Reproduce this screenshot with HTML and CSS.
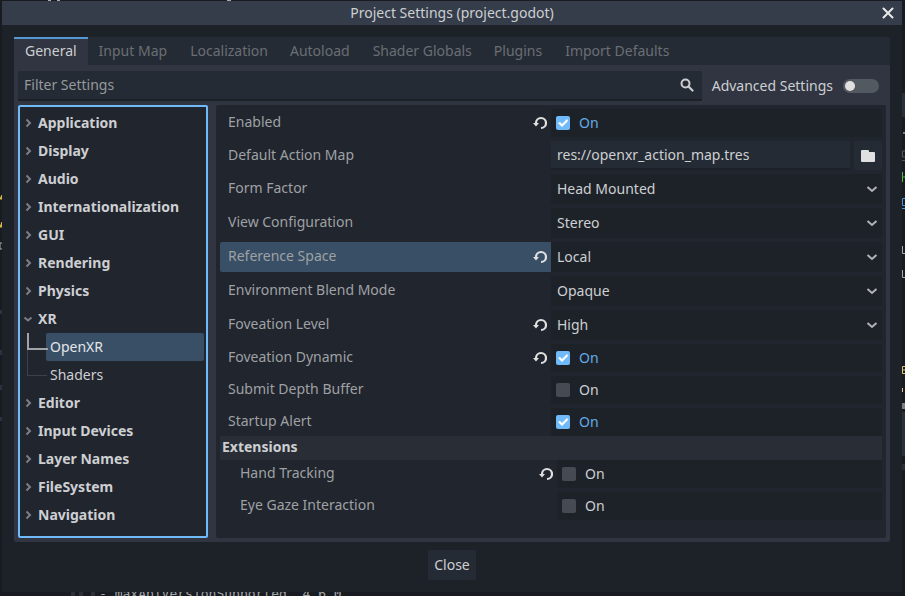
FILE: index.html
```html
<!DOCTYPE html>
<html lang="en">
<head>
<meta charset="utf-8">
<title>Project Settings (project.godot)</title>
<link rel="stylesheet" href="styles.css">
</head>
<body>
<svg class="symbols" aria-hidden="true">
  <symbol id="right" viewBox="0 0 12 12"><path d="M4.500 2.500 8 6 4.500 9.500" fill="none" stroke="currentColor" stroke-width="2"/></symbol>
  <symbol id="down" viewBox="0 0 12 12"><path d="M2.500 4.500 6 7.500 9.500 4.500" fill="none" stroke="currentColor" stroke-width="2"/></symbol>
  <symbol id="drop" viewBox="0 0 12 12"><path d="M1.500 4 6 8 10.500 4" fill="none" stroke="currentColor" stroke-width="2"/></symbol>
  <symbol id="revert" viewBox="0 0 14 14"><path d="M3 8V7a5 5 0 1 1 5 5" fill="none" stroke="currentColor" stroke-width="2.200"/><path d="M0 7h6L3 10.500z" fill="currentColor"/></symbol>
</svg>

<div class="editor" aria-hidden="true">
  <svg class="edge" width="3" height="596" viewBox="0 0 3 596">
    <path d="M0 199l2-4v4zM0 227l2-5v5z" fill="#d9b94c" stroke="#d9b94c"/>
    <path d="M2 243H0v6h2" fill="none" stroke="#a9abad"/>
    <path d="M0 310h2v4H0zM0 350h2v5H0zM0 385h2v5H0zM0 417h2v4H0z" fill="#2c313b"/>
  </svg>
  <svg class="edge edge-right" width="3" height="596" viewBox="0 0 3 596">
    <path d="M0 93h3v24H0zM0 412h3v44H0zM0 464h3v6H0z" fill="#2a303a"/>
    <path d="M1 132h2v2H1zM0 403h3v6H0z" fill="#7b7e82"/>
    <path d="M3 151H.5v6H3M0 160.500h3" fill="none" stroke="#555a61"/>
    <path d="M.5 172v10M.5 177H3" fill="none" stroke="#4fb83d"/>
    <path d="M3 198.500H.5v7H3M0 208.500h3" fill="none" stroke="#4796dc"/>
    <path d="M.5 246v7.500H3M.5 270v7.500H3" fill="none" stroke="#a9abad"/>
    <path d="M3 366.500H.5v7H3M0 370h3M.5 388v4" fill="none" stroke="#d8c878"/>
  </svg>
  <svg class="top-bits" width="240" height="1" viewBox="0 0 240 1"><path d="M48 0h3v1h-3zM57 0h3v1h-3zM227 0h4v1h-4z" fill="#a9abad"/></svg>
  <svg class="bottom-bits" width="96" height="4" viewBox="0 0 96 4"><path d="M71 0h4v4h-4zM79 0h4v4h-4zM91 0h4v4h-4z" fill="#2c2f38"/></svg>
  <p class="log">- maxApiVersionSupported  4.6.0</p>
</div>

<main class="dialog" role="dialog" aria-labelledby="dialog-title">
  <header class="titlebar">
    <h1 id="dialog-title">Project Settings (project.godot)</h1>
    <button class="dismiss" aria-label="Close window"><svg width="12" height="12" viewBox="0 0 12 12"><path d="M1.500 1.500l9 9M10.500 1.500l-9 9" fill="none" stroke="currentColor" stroke-width="2" stroke-linecap="round"/></svg></button>
  </header>

  <div class="content">
    <nav class="tabs" role="tablist">
      <button role="tab" class="tab active" aria-selected="true">General</button>
      <button role="tab" class="tab">Input Map</button>
      <button role="tab" class="tab">Localization</button>
      <button role="tab" class="tab">Autoload</button>
      <button role="tab" class="tab">Shader Globals</button>
      <button role="tab" class="tab">Plugins</button>
      <button role="tab" class="tab">Import Defaults</button>
    </nav>

    <section class="panel">
      <div class="toolbar">
        <div class="search">
          <input type="text" placeholder="Filter Settings" aria-label="Filter Settings">
          <svg width="14" height="14" viewBox="0 0 14 14"><circle cx="5.500" cy="5.500" r="4" fill="none" stroke="currentColor" stroke-width="2"/><path d="M8.500 8.500l4 4" stroke="currentColor" stroke-width="2.200" stroke-linecap="round"/></svg>
        </div>
        <label class="advanced">Advanced Settings <input type="checkbox" class="switch"></label>
      </div>

      <div class="split">
        <ul class="tree">
          <li><a href="#"><svg><use href="#right"/></svg>Application</a></li>
          <li><a href="#"><svg><use href="#right"/></svg>Display</a></li>
          <li><a href="#"><svg><use href="#right"/></svg>Audio</a></li>
          <li><a href="#"><svg><use href="#right"/></svg>Internationalization</a></li>
          <li><a href="#"><svg><use href="#right"/></svg>GUI</a></li>
          <li><a href="#"><svg><use href="#right"/></svg>Rendering</a></li>
          <li><a href="#"><svg><use href="#right"/></svg>Physics</a></li>
          <li><a href="#"><svg><use href="#down"/></svg>XR</a>
            <ul>
              <li class="branch current"><a href="#" aria-current="true">OpenXR</a></li>
              <li class="branch"><a href="#">Shaders</a></li>
            </ul>
          </li>
          <li><a href="#"><svg><use href="#right"/></svg>Editor</a></li>
          <li><a href="#"><svg><use href="#right"/></svg>Input Devices</a></li>
          <li><a href="#"><svg><use href="#right"/></svg>Layer Names</a></li>
          <li><a href="#"><svg><use href="#right"/></svg>FileSystem</a></li>
          <li><a href="#"><svg><use href="#right"/></svg>Navigation</a></li>
        </ul>

        <form class="inspector">
          <div class="row">
            <div class="name"><label for="enabled">Enabled</label><button type="button" class="revert" aria-label="Revert Enabled"><svg><use href="#revert"/></svg></button></div>
            <label class="field check"><input type="checkbox" id="enabled" checked><span>On</span></label>
          </div>
          <div class="row">
            <div class="name"><label for="map">Default Action Map</label></div>
            <div class="path"><input type="text" id="map" value="res://openxr_action_map.tres"><button type="button" aria-label="Browse"><svg width="14" height="12" viewBox="0 0 14 12"><path d="M0 1q0-1 1-1h6q1 0 1 1v1h5q1 0 1 1v8q0 1-1 1H1q-1 0-1-1z" fill="currentColor"/></svg></button></div>
          </div>
          <div class="row">
            <div class="name"><label for="form">Form Factor</label></div>
            <div class="field pick"><select id="form"><option>Head Mounted</option></select><svg><use href="#drop"/></svg></div>
          </div>
          <div class="row">
            <div class="name"><label for="view">View Configuration</label></div>
            <div class="field pick"><select id="view"><option>Stereo</option></select><svg><use href="#drop"/></svg></div>
          </div>
          <div class="row">
            <div class="name selected"><label for="space">Reference Space</label><button type="button" class="revert" aria-label="Revert Reference Space"><svg><use href="#revert"/></svg></button></div>
            <div class="field pick"><select id="space"><option>Local</option></select><svg><use href="#drop"/></svg></div>
          </div>
          <div class="row">
            <div class="name"><label for="blend">Environment Blend Mode</label></div>
            <div class="field pick"><select id="blend"><option>Opaque</option></select><svg><use href="#drop"/></svg></div>
          </div>
          <div class="row">
            <div class="name"><label for="level">Foveation Level</label><button type="button" class="revert" aria-label="Revert Foveation Level"><svg><use href="#revert"/></svg></button></div>
            <div class="field pick"><select id="level"><option>High</option></select><svg><use href="#drop"/></svg></div>
          </div>
          <div class="row">
            <div class="name"><label for="dynamic">Foveation Dynamic</label><button type="button" class="revert" aria-label="Revert Foveation Dynamic"><svg><use href="#revert"/></svg></button></div>
            <label class="field check"><input type="checkbox" id="dynamic" checked><span>On</span></label>
          </div>
          <div class="row">
            <div class="name"><label for="depth">Submit Depth Buffer</label></div>
            <label class="field check"><input type="checkbox" id="depth"><span>On</span></label>
          </div>
          <div class="row">
            <div class="name"><label for="alert">Startup Alert</label></div>
            <label class="field check"><input type="checkbox" id="alert" checked><span>On</span></label>
          </div>
          <fieldset>
            <legend>Extensions</legend>
            <div class="row">
              <div class="name"><label for="hand">Hand Tracking</label><button type="button" class="revert" aria-label="Revert Hand Tracking"><svg><use href="#revert"/></svg></button></div>
              <label class="field check"><input type="checkbox" id="hand"><span>On</span></label>
            </div>
            <div class="row">
              <div class="name"><label for="gaze">Eye Gaze Interaction</label></div>
              <label class="field check"><input type="checkbox" id="gaze"><span>On</span></label>
            </div>
          </fieldset>
        </form>
      </div>
    </section>

    <footer><button class="close">Close</button></footer>
  </div>
</main>
</body>
</html>
```
FILE: styles.css
```css
:root {
  --base: #363d4a;
  --panel: #303541;
  --control: #252b34;
  --well: #21252e;
  --dark: #1d2229;
  --selection: #384f66;
  --accent: #70bafa;
  --text: #cdcfd2;
  --muted: #9fa1a4;
}

* { box-sizing: border-box; }

body {
  margin: 0;
  min-height: 100vh;
  display: flex;
  padding: 1px 3px 4px 2px;
  position: relative;
  background: #181b21;
  color: var(--text);
  font: 14px/20px "Noto Sans", sans-serif;
}

button, input, select {
  margin: 0;
  padding: 0;
  border: 0;
  border-radius: 0;
  background: none;
  color: inherit;
  font: inherit;
  outline: 0;
}

svg { display: block; flex: none; }
ul { list-style: none; margin: 0; padding: 0; }
.symbols { position: absolute; width: 0; height: 0; }

/* Editor window showing around the dialog */
.editor { position: absolute; inset: 0; overflow: hidden; }
.edge { position: absolute; left: 0; top: 0; }
.edge-right { left: auto; right: 0; }
.top-bits { position: absolute; left: 0; top: 0; }
.bottom-bits { position: absolute; left: 0; bottom: 0; }
.log {
  position: absolute;
  left: 99px;
  bottom: -7px;
  margin: 0;
  color: #a3a5a8;
  font: 13px/18px "DejaVu Sans Mono", monospace;
  white-space: pre;
}

.dialog {
  position: relative;
  flex: 1;
  min-width: 0;
  display: flex;
  flex-direction: column;
  background: var(--dark);
}

.titlebar {
  display: grid;
  grid-template-columns: 1fr auto 1fr;
  align-items: center;
  height: 24px;
  padding: 0 8px;
  background: var(--base);
}
.titlebar h1 { grid-column: 2; margin: 0; font-size: 14px; font-weight: 400; }
.dismiss { justify-self: end; color: #e8e9ea; }

.content {
  flex: 1;
  display: flex;
  flex-direction: column;
  padding: 12px;
}

.tabs { display: flex; background: var(--control); border-radius: 0 2px 0 0; }
.tab {
  height: 28px;
  padding: 0 11px 2px;
  border-top: 2px solid transparent;
  color: #6a6e75;
}
.tab:nth-child(even) { padding-right: 12px; }
.tab.active { border-color: #5597d3; background: var(--panel); color: var(--text); }

.panel {
  flex: 1;
  display: flex;
  flex-direction: column;
  gap: 4px;
  padding: 6px 4px 4px;
  border-radius: 0 0 2px 2px;
  background: var(--panel);
}

.toolbar { display: flex; align-items: center; gap: 10px; }
.search {
  flex: 1;
  display: flex;
  align-items: center;
  height: 30px;
  padding: 0 8px 0 6px;
  border-bottom: 2px solid #1c2027;
  border-radius: 2px 2px 0 0;
  background: var(--control);
}
.search input { flex: 1; min-width: 0; height: 28px; padding-bottom: 2px; }
.search input::placeholder { color: #95989d; opacity: 1; }
.advanced { display: flex; align-items: center; gap: 10px; padding-right: 7px; }
.switch {
  appearance: none;
  width: 36px;
  height: 14px;
  padding: 2px;
  border-radius: 7px;
  background: #535961;
}
.switch::before {
  content: "";
  display: block;
  width: 10px;
  height: 10px;
  border-radius: 5px;
  background: #e0e0e0;
}

.split { flex: 1; display: flex; gap: 8px; }

.tree {
  flex: 0 0 190px;
  padding: 2px;
  border: 2px solid var(--accent);
  border-radius: 2px;
  background: var(--well);
}
.tree a {
  display: flex;
  align-items: center;
  gap: 4px;
  height: 28px;
  color: inherit;
  font-weight: 700;
  text-decoration: none;
}
.tree svg { width: 12px; height: 12px; color: #7c7f85; }
.branch { position: relative; padding-left: 24px; }
.branch::before {
  content: "";
  position: absolute;
  left: 5px;
  top: -11px;
  width: 19px;
  height: 25px;
  border: solid #3b4049;
  border-width: 0 0 1px 1px;
}
.branch.current::before { top: 0; height: 15px; border-color: #a0a3a7; border-width: 0 0 2px 2px; }
.branch a { padding-left: 4px; border-radius: 2px; font-weight: 400; }
.branch.current a { background: var(--selection); color: #e4e6e8; }

.inspector {
  flex: 1;
  min-width: 0;
  display: flex;
  flex-direction: column;
  gap: 4px;
  padding: 4px;
  border-radius: 2px;
  background: var(--well);
}
.row { display: grid; grid-template-columns: 1fr 1fr; }
.name {
  display: flex;
  align-items: center;
  justify-content: space-between;
  padding: 0 4px 0 8px;
  border-radius: 2px 0 0 2px;
  color: var(--muted);
}
.name label { padding-bottom: 2px; }
.name.selected { background: var(--selection); }
.revert { color: #e0e0e0; }
.revert svg { width: 14px; height: 14px; }

.field { border-radius: 2px; background: var(--dark); }
.check { display: flex; align-items: center; gap: 9px; height: 28px; padding-left: 5px; }
.check input {
  appearance: none;
  width: 14px;
  height: 14px;
  border-radius: 2px;
  background: #464a53;
}
.check input:checked { background: var(--accent); }
.check input:checked::before {
  content: "";
  display: block;
  width: 14px;
  height: 14px;
  background: #fff;
  clip-path: polygon(2px 7px, 4px 6px, 6px 8px, 11px 3px, 12px 5px, 6px 11px);
}
.check input:checked + span { color: #63abe6; }

.pick { display: grid; align-items: center; }
.pick select, .pick svg { grid-area: 1 / 1; }
.pick select { appearance: none; width: 100%; height: 30px; padding: 0 24px 0 6px; }
.pick svg { justify-self: end; width: 12px; height: 12px; margin-right: 4px; color: #b0b2b5; pointer-events: none; }

.path { display: flex; align-items: flex-start; gap: 4px; }
.path input {
  flex: 1;
  min-width: 0;
  height: 29px;
  padding: 0 6px;
  border-bottom: 2px solid #1c2027;
  background: var(--control);
}
.path button {
  display: grid;
  place-items: center;
  width: 28px;
  height: 29px;
  border-radius: 2px;
  background: var(--control);
  color: #e0e0e0;
}

fieldset {
  display: flex;
  flex-direction: column;
  gap: 4px;
  min-width: 0;
  margin: -4px 0 0;
  padding: 0;
  border: 0;
}
legend {
  width: 100%;
  height: 24px;
  padding: 0 2px;
  background: #292e36;
  font-weight: 700;
  line-height: 22px;
}
fieldset .row { margin-left: 12px; }

footer { display: flex; justify-content: center; padding-top: 8px; }
.close { height: 30px; padding: 0 6px; border-radius: 2px; background: var(--control); }
```
